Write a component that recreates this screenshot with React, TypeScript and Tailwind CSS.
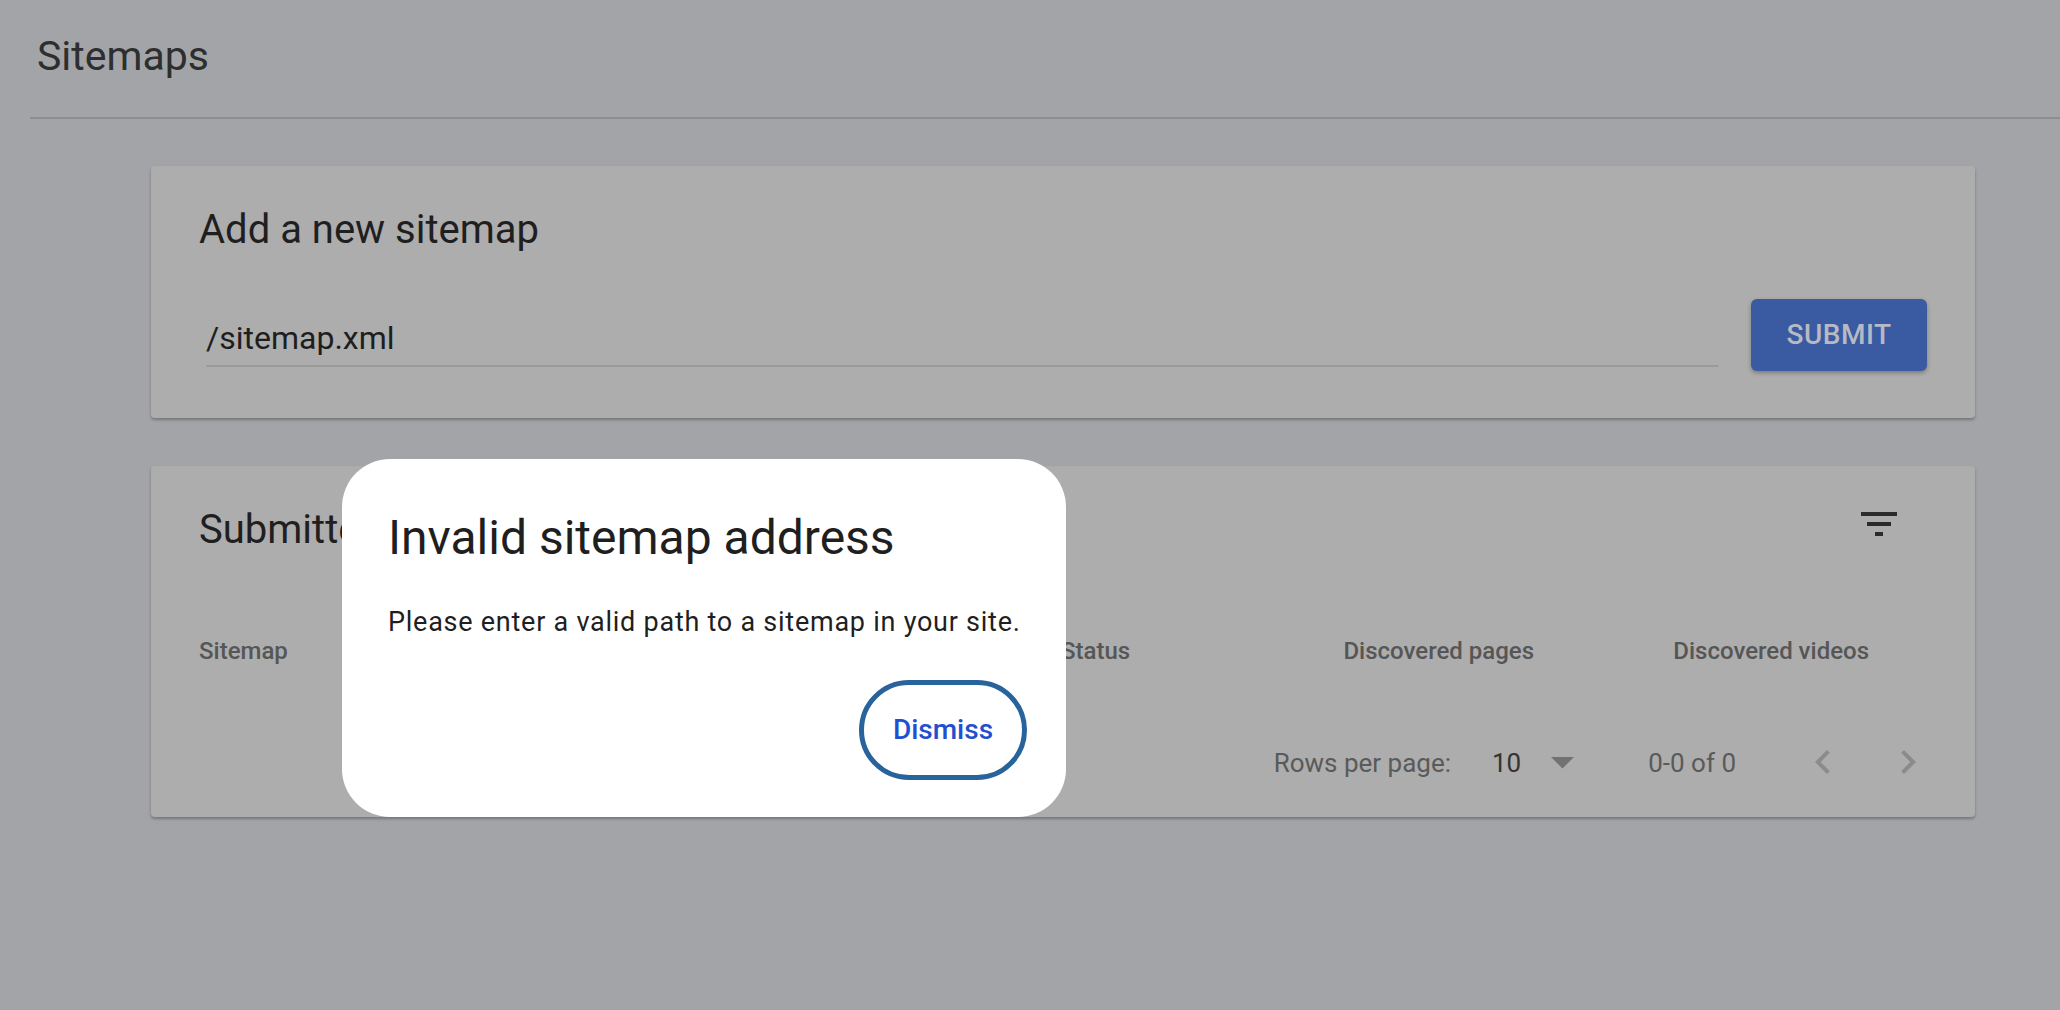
import React from "react";

function FilterIcon() {
  return (
    <svg width="48" height="48" viewBox="0 0 24 24" className="fill-[#2b2b2b]">
      <path d="M10 18h4v-2h-4v2zM3 6v2h18V6H3zm3 7h12v-2H6v2z" />
    </svg>
  );
}

function ChevronLeft() {
  return (
    <svg width="48" height="48" viewBox="0 0 24 24" className="fill-[#8b8b8b]">
      <path d="M15.41 7.41L14 6l-6 6 6 6 1.41-1.41L10.83 12z" />
    </svg>
  );
}

function ChevronRight() {
  return (
    <svg width="48" height="48" viewBox="0 0 24 24" className="fill-[#8b8b8b]">
      <path d="M10 6L8.59 7.41 13.17 12l-4.58 4.59L10 18l6-6z" />
    </svg>
  );
}

export default function App() {
  return (
    <div className="relative min-h-screen w-full bg-[#a3a4a8] font-[Roboto,sans-serif] text-[#232323]">
      {/* page header */}
      <div className="ml-[30px] pt-[32px] pb-[37px] border-b-2 border-[#8d8e91]">
        <h1 className="pl-[7px] text-[41px] leading-[48px] text-[#2e2e2e]">Sitemaps</h1>
      </div>

      <div className="pl-[151px] pr-[85px] pt-[47px] space-y-[48px]">
        {/* add sitemap */}
        <div className="h-[252px] rounded-[4px] bg-[#adadad] shadow-[0_2px_3px_rgba(0,0,0,0.28)] px-[48px] pt-[40px]">
          <h2 className="text-[40px] leading-[48px] text-[#1f1f1f]">Add a new sitemap</h2>
          <div className="mt-[45px] flex items-start">
            <div className="flex-1 ml-[7px] mr-[33px] mt-[19px] pb-[7px] border-b-2 border-[#9a9a9a]">
              <div className="text-[32px] leading-[40px] text-[#1e1e1e]">/sitemap.xml</div>
            </div>
            <button className="w-[176px] h-[72px] rounded-[6px] bg-[#3a5aa2] text-[#b6bac4] text-[28px] font-medium tracking-[0.5px] shadow-[0_2px_4px_rgba(0,0,0,0.3)]">
              SUBMIT
            </button>
          </div>
        </div>

        {/* submitted sitemaps */}
        <div className="h-[351px] rounded-[4px] bg-[#adadad] shadow-[0_2px_3px_rgba(0,0,0,0.28)] px-[48px] pt-[40px]">
          <div className="flex items-start justify-between">
            <h2 className="text-[40px] leading-[48px] text-[#1f1f1f]">Submitted sitemaps</h2>
            <div className="-mt-[6px] mr-[24px]">
              <FilterIcon />
            </div>
          </div>
          <div className="mt-[81px] grid grid-cols-[862px_200px_273px_335px] text-[24px] leading-[32px] font-medium text-[#565656]">
            <div>Sitemap</div>
            <div>Status</div>
            <div className="text-right">Discovered pages</div>
            <div className="text-right">Discovered videos</div>
          </div>
          <div className="mt-[71px] -mr-[5px] h-[48px] flex items-center justify-end text-[26px] leading-[32px] text-[#5a5a5a]">
            <span className="mt-[2px]">Rows per page:</span>
            <span className="mt-[2px] ml-[41px] text-[#333]">10</span>
            <svg width="23" height="12" viewBox="0 0 23 12" className="ml-[30px] mr-[2px] mt-[2px] fill-[#727272]">
              <polygon points="0,0 23,0 11.5,11.5" />
            </svg>
            <span className="mt-[2px] ml-[72px]">0-0 of 0</span>
            <div className="ml-[63px]">
              <ChevronLeft />
            </div>
            <div className="ml-[37px]">
              <ChevronRight />
            </div>
          </div>
        </div>
      </div>

      {/* dialog */}
      <div className="absolute left-[342px] top-[459px] w-[724px] h-[358px] rounded-[48px] bg-white flex flex-col pt-[51px] pl-[46px] pr-[39px] pb-[37px]">
        <div className="text-[48px] leading-[56px] text-[#1f1f1f]">Invalid sitemap address</div>
        <div className="mt-[38px] text-[27px] leading-[36px] tracking-[0.75px] text-[#1f1f1f]">
          Please enter a valid path to a sitemap in your site.
        </div>
        <button className="mt-[40px] self-end w-[168px] h-[100px] rounded-full border-[5px] border-[#29639b] text-[28px] font-medium text-[#1f50d0]">
          Dismiss
        </button>
      </div>
    </div>
  );
}
